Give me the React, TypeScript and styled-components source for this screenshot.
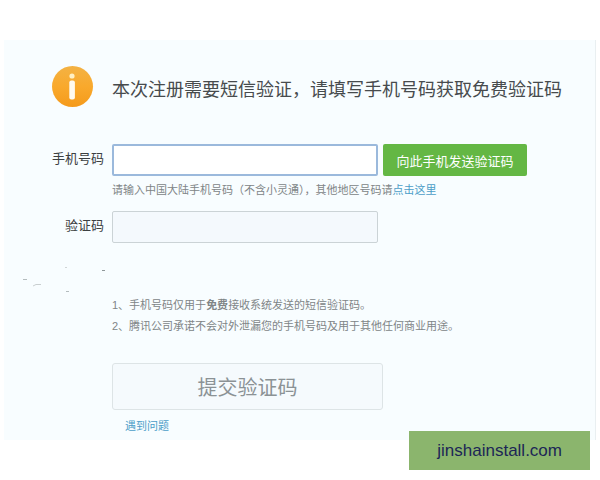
import React from "react";
import styled, { createGlobalStyle } from "styled-components";

const GlobalStyle = createGlobalStyle`
  * { box-sizing: border-box; }
  body {
    margin: 0;
    background: #fff;
    font-family: "Liberation Sans", "Noto Sans CJK SC", sans-serif;
    color: #444;
  }
  button, input { font-family: inherit; }
`;

const Page = styled.div`
  position: relative;
  min-height: 100vh;
  padding: 40px 4px;
`;

const Panel = styled.main`
  position: relative;
  padding: 26px 40px 6px 48px;
  background: #f8fdff;
  border-right: 1px solid #e9eff1;
`;

const Header = styled.header`
  display: flex;
  align-items: center;
  gap: 18px;
  margin-bottom: 36px;
`;

const InfoIcon = styled.svg`
  flex: none;
  width: 42px;
  height: 42px;
`;

const Title = styled.h1`
  margin: 0;
  padding-top: 2px;
  font-size: 18px;
  line-height: 28px;
  font-weight: 400;
  font-family: "Noto Sans CJK SC", sans-serif;
  color: #474b4d;
  white-space: nowrap;
`;

const Form = styled.form`
  display: grid;
  grid-template-columns: 52px minmax(0, 1fr);
  column-gap: 8px;
`;

const Label = styled.label`
  font-size: 13px;
  line-height: 30px;
  text-align: right;
  color: #3c4042;
  white-space: nowrap;
`;

const Field = styled.div`
  display: flex;
  gap: 5px;
`;

const TextInput = styled.input<{ $active?: boolean }>`
  width: 266px;
  height: 32px;
  padding: 0 8px;
  font-size: 13px;
  outline: none;
  border-radius: 2px;
  border: ${(p) => (p.$active ? "2px solid #9bb9dc" : "1px solid #cbd3d6")};
  background: ${(p) => (p.$active ? "#fff" : "#f4f9fd")};
`;

const SendButton = styled.button`
  width: 144px;
  height: 32px;
  padding: 0;
  border: 0;
  border-radius: 2px;
  background: #64b744;
  color: #fff;
  font-size: 13px;
`;

const Link = styled.a`
  color: #4c9dc8;
  text-decoration: none;
`;

const Hint = styled.p`
  grid-column: 2;
  margin: 6px 0 12px;
  font-size: 11px;
  line-height: 17px;
  color: #808587;
  white-space: nowrap;
`;

const Notes = styled.ol`
  grid-column: 2;
  margin: 52px 0 26px;
  padding: 0;
  list-style: none;
  font-size: 11px;
  line-height: 21px;
  color: #808587;
  white-space: nowrap;
`;

const Actions = styled.div`
  grid-column: 2;
  display: flex;
  flex-direction: column;
  align-items: flex-start;
  gap: 8px;
`;

const SubmitButton = styled.button`
  width: 271px;
  height: 47px;
  padding: 0;
  border: 1px solid #dde4e6;
  border-radius: 3px;
  background: #f5fafd;
  color: #8b9295;
  font-size: 20px;
`;

const HelpLink = styled(Link)`
  margin-left: 13px;
  font-size: 11px;
  line-height: 16px;
`;

const Specks = styled.svg`
  position: absolute;
  left: 17px;
  top: 224px;
  width: 90px;
  height: 32px;
  pointer-events: none;
`;

const SiteTag = styled.aside`
  position: absolute;
  right: 10px;
  bottom: 10px;
  padding: 0 28px;
  background: #8bb56d;
  color: #1c2656;
  font-size: 17px;
  line-height: 39px;
`;

export default function App() {
  return (
    <>
      <GlobalStyle />
      <Page>
        <Panel>
          <Header>
            <InfoIcon viewBox="0 0 42 42" aria-hidden="true">
              <defs>
                <linearGradient id="amber" x1="0" y1="0" x2="0" y2="1">
                  <stop offset="0" stopColor="#f3b244" />
                  <stop offset="0.5" stopColor="#f9a92c" />
                  <stop offset="1" stopColor="#f59a1b" />
                </linearGradient>
              </defs>
              <circle cx="20.5" cy="20.5" r="20.5" fill="url(#amber)" />
              <circle cx="20" cy="10" r="2.6" fill="#fff0c4" />
              <rect x="17.300" y="14.500" width="5.600" height="19" rx="2" fill="#fffaf0" />
            </InfoIcon>
            <Title>本次注册需要短信验证，请填写手机号码获取免费验证码</Title>
          </Header>
          <Form onSubmit={(e) => e.preventDefault()}>
            <Label htmlFor="phone">手机号码</Label>
            <Field>
              <TextInput id="phone" type="tel" $active />
              <SendButton type="button">向此手机发送验证码</SendButton>
            </Field>
            <Hint>
              请输入中国大陆手机号码（不含小灵通），其他地区号码请<Link href="#region">点击这里</Link>
            </Hint>
            <Label htmlFor="code">验证码</Label>
            <Field>
              <TextInput id="code" type="text" />
            </Field>
            <Notes>
              <li>1、手机号码仅用于<b>免费</b>接收系统发送的短信验证码。</li>
              <li>2、腾讯公司承诺不会对外泄漏您的手机号码及用于其他任何商业用途。</li>
            </Notes>
            <Actions>
              <SubmitButton type="submit">提交验证码</SubmitButton>
              <HelpLink href="#help">遇到问题</HelpLink>
            </Actions>
          </Form>
          <Specks viewBox="0 0 90 32" aria-hidden="true">
            <g fill="none" stroke="#b4bcbe">
              <path d="M2 15.500h4" />
              <path d="M12 22l3-1.500h5" stroke="#c9cfd0" />
              <path d="M44 3.500h2" stroke="#d0d5d6" />
              <path d="M45 27.500h3" />
              <path d="M81 6.500h3" stroke="#8f9799" />
            </g>
          </Specks>
        </Panel>
        <SiteTag>jinshainstall.com</SiteTag>
      </Page>
    </>
  );
}
